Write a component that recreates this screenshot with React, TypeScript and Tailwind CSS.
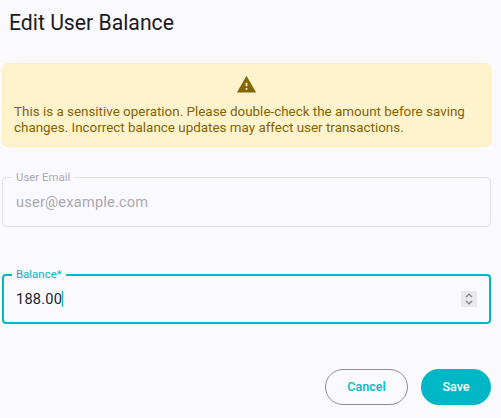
import type { ReactNode } from "react";

type FieldProps = {
  label: string;
  active?: boolean;
  children: ReactNode;
};

function OutlinedField({ label, active = false, children }: FieldProps) {
  return (
    <div
      className={
        active
          ? "relative flex h-[50px] items-center rounded-[4px] border-2 border-[#00b8c5] pr-[12px] pl-[12px]"
          : "relative flex h-[50px] items-center rounded-[4px] border border-[#e3e2e8] pr-[13px] pl-[13px]"
      }
    >
      <span
        className={
          active
            ? "absolute -top-[10px] left-[8px] bg-[#faf9fe] pr-[4px] pl-[4px] text-[11.4px] leading-[16px] tracking-[0.02px] text-[#00b8c5]"
            : "absolute -top-[9px] left-[9px] bg-[#faf9fe] pr-[4px] pl-[4px] text-[11.4px] leading-[16px] tracking-[0.02px] text-[#aaa9ae]"
        }
      >
        {label}
      </span>
      {children}
    </div>
  );
}

function WarningIcon() {
  return (
    <svg className="h-[21px] w-[21px]" viewBox="0 0 24 24" fill="#856404" aria-hidden="true">
      <path d="M1 21h22L12 2 1 21zm12-3h-2v-2h2v2zm0-4h-2v-4h2v4z" />
    </svg>
  );
}

export default function App() {
  return (
    <main className="h-[418px] w-[501px] bg-[#faf9fe] pt-[9px] pr-[10px] pl-[2px] font-[Roboto,sans-serif] text-[#1b1b1f]">
      <h1 className="pl-[7px] text-[21.2px] leading-[28px] whitespace-nowrap">Edit User Balance</h1>

      <div className="mt-[26px] flex h-[84px] flex-col rounded-[6px] border border-[#ffeeba] bg-[#fff3cd] pt-[10px] pl-[11px] text-[#856404]">
        <div className="flex justify-center pr-[12px]">
          <WarningIcon />
        </div>
        <p className="mt-[9px] text-[13.42px] leading-[16px] whitespace-nowrap">
          This is a sensitive operation. Please double-check the amount before saving
          <br />
          changes. Incorrect balance updates may affect user transactions.
        </p>
      </div>

      <div className="mt-[30px]">
        <OutlinedField label="User Email">
          <span className="text-[14.6px] leading-[20px] tracking-[0.2px] text-[#aaa9ae]">user@example.com</span>
        </OutlinedField>
      </div>

      <div className="mt-[47px]">
        <OutlinedField label="Balance*" active>
          <span className="text-[14.6px] leading-[20px] tracking-[0.2px]">188.00</span>
          <span className="h-[16px] w-px bg-[#00b8c5]" />
          <span className="ml-auto flex h-[16px] w-[16px] items-center justify-center bg-[#e9e9ed]">
            <svg className="h-[16px] w-[16px]" viewBox="0 0 16 16" fill="none" stroke="#8a8a90" strokeWidth="1.5">
              <path d="M5 6 8 3.2 11 6M5 10 8 12.8 11 10" />
            </svg>
          </span>
        </OutlinedField>
      </div>

      <div className="mt-[45px] flex justify-end gap-[13px] text-[12.6px] font-medium">
        <button type="button" className="h-[36px] w-[83px] rounded-full border border-[#8e8d94] text-[#00b8c5]">
          Cancel
        </button>
        <button type="button" className="h-[36px] w-[70px] rounded-full bg-[#00b8c5] text-white">
          Save
        </button>
      </div>
    </main>
  );
}
